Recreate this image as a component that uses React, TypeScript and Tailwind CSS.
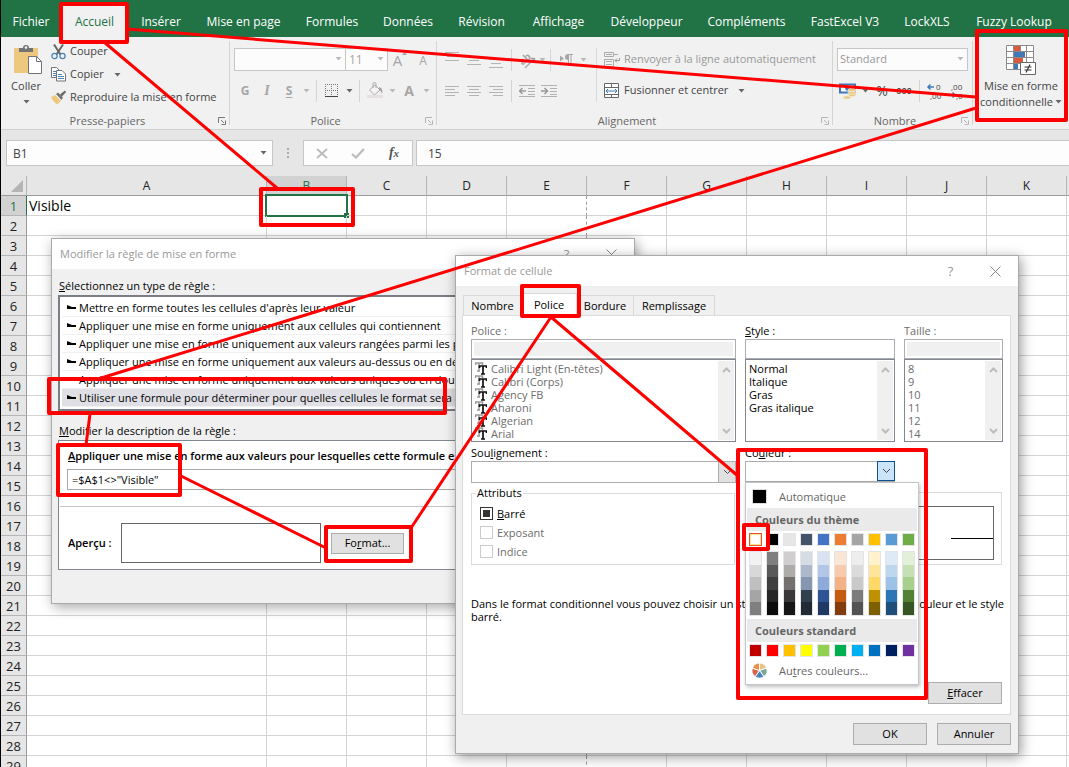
import React from "react";

const UI = "font-['Open_Sans','Noto_Sans',sans-serif]";

function Arrow({ className = "text-[#666]" }: { className?: string }) {
  return (
    <svg width="7" height="4" viewBox="0 0 7 4" className={"shrink-0 " + className} aria-hidden="true">
      <path d="M0.5 0h6L3.5 3.5z" fill="currentColor" />
    </svg>
  );
}

function Chevron({ up = false, className = "text-[#bcbcbc]", thick = 2 }: { up?: boolean; className?: string; thick?: number }) {
  return (
    <svg width="9" height="6" viewBox="0 0 9 6" className={"shrink-0 " + className} aria-hidden="true">
      <path d={up ? "M1 5l3.5-3.5L8 5" : "M1 1l3.5 3.5L8 1"} fill="none" stroke="currentColor" strokeWidth={thick} />
    </svg>
  );
}

function Launcher({ dim = false }: { dim?: boolean }) {
  return (
    <svg width="8" height="8" viewBox="0 0 8 8" className={dim ? "text-[#b5b5b5]" : "text-[#777]"} aria-hidden="true">
      <path d="M0.5 6V0.5H7M3 3l3 3M7.5 3.5v4h-4" fill="none" stroke="currentColor" />
    </svg>
  );
}

function Group({ title, width, dim, children }: { title: string; width: string; dim?: boolean; children: React.ReactNode }) {
  return (
    <section className={"relative flex shrink-0 flex-col " + width}>
      <div className="h-[76px]">{children}</div>
      <div className="flex h-4 items-center pr-1">
        <span className="flex-1 pr-1 text-center text-[11px] leading-4 text-[#666]">{title}</span>
        <button aria-label={title + " : options"}>
          <Launcher dim={dim} />
        </button>
      </div>
      <div className="absolute top-1 right-0 h-[84px] w-px bg-[#d4d4d4]" />
    </section>
  );
}

function Sep() {
  return <div className="mx-1 h-[22px] w-px shrink-0 bg-[#d4d4d4]" />;
}

function Tool({ label, width = "w-[22px]", children }: { label: string; width?: string; children: React.ReactNode }) {
  return (
    <button aria-label={label} className={"flex h-[23px] shrink-0 items-center justify-center " + width}>
      {children}
    </button>
  );
}

function Lines({ rows, className = "text-[#b4b4b4]" }: { rows: [number, number, number][]; className?: string }) {
  return (
    <svg width="16" height="16" viewBox="0 0 16 16" className={className} aria-hidden="true">
      {rows.map(([x, y, w]) => (
        <rect key={y} x={x} y={y} width={w} height="1" fill="currentColor" />
      ))}
    </svg>
  );
}

const tabs: [string, string][] = [
  ["Fichier", "w-[60px]"],
  ["Accueil", "w-[67px]"],
  ["Insérer", "w-[66px]"],
  ["Mise en page", "w-[99px]"],
  ["Formules", "w-[78px]"],
  ["Données", "w-[74px]"],
  ["Révision", "w-[73px]"],
  ["Affichage", "w-[81px]"],
  ["Développeur", "w-[95px]"],
  ["Compléments", "w-[105px]"],
  ["FastExcel V3", "w-[92px]"],
  ["LockXLS", "w-[72px]"],
  ["Fuzzy Lookup", "w-[102px]"],
];

function RibbonTabs() {
  return (
    <nav className="flex h-[37px] shrink-0 items-end bg-[#217346] text-xs text-white">
      {tabs.map(([name, width]) => (
        <button
          key={name}
          className={
            "h-[31px] shrink-0 whitespace-nowrap " + width + (name === "Accueil" ? " bg-[#f1f1f1] text-[#217346]" : "")
          }
        >
          {name}
        </button>
      ))}
    </nav>
  );
}

function Clipboard() {
  return (
    <Group title="Presse-papiers" width="w-[229px]">
      <div className="flex pt-[3px]">
        <button className="flex w-[50px] flex-col items-center pt-1">
          <svg width="30" height="32" viewBox="0 0 30 32" className="ml-1" aria-hidden="true">
            <rect x="1" y="4" width="24" height="25" fill="#edc87e" />
            <path d="M6 8V4h4a3 3 0 0 1 6 0h4v4z" fill="#737373" />
            <circle cx="13" cy="3.6" r="1.3" fill="#f1f1f1" />
            <path d="M15.5 12.500h8l5 5v12h-13z" fill="#fff" stroke="#737373" />
            <path d="M23.500 12.500v5h5" fill="none" stroke="#737373" />
          </svg>
          <span className="text-[11px] leading-5 text-[#444]">Coller</span>
          <Arrow className="mt-1 text-[#666]" />
        </button>
        <div className="flex flex-col text-[11px] text-[#444]">
          <button className="flex h-[23px] items-center gap-1">
            <svg width="15" height="16" viewBox="0 0 15 16" aria-hidden="true">
              <path d="M3 0.500l6.500 10M12 0.500L5.500 10.500" stroke="#666" strokeWidth="2" fill="none" />
              <circle cx="3.500" cy="12" r="2.600" fill="none" stroke="#4b82b8" strokeWidth="1.300" />
              <circle cx="11.500" cy="12" r="2.600" fill="none" stroke="#4b82b8" strokeWidth="1.300" />
            </svg>
            Couper
          </button>
          <button className="flex h-[23px] items-center gap-1">
            <svg width="15" height="15" viewBox="0 0 15 15" aria-hidden="true">
              <path d="M0.500 0.500h5l3 3v7h-8z" fill="#fff" stroke="#737373" />
              <path d="M2 4.500h4M2 6.500h4M2 8.500h3" stroke="#4b82b8" />
              <path d="M5.500 3.500h5.500l3.500 3.500v7h-9z" fill="#fff" stroke="#737373" />
              <path d="M7 7.500h4M7 9.500h6M7 11.500h6" stroke="#4b82b8" />
            </svg>
            Copier
            <Arrow className="ml-1.5 text-[#666]" />
          </button>
          <button className="flex h-[23px] items-center gap-1 whitespace-nowrap">
            <svg width="15" height="15" viewBox="0 0 15 15" aria-hidden="true">
              <path d="M0 7l4-2 6 6-4 3.500C4 13 1.500 10.500 0 7z" fill="#edc87e" />
              <path d="M5 4l2-1.500 5 5L10.500 10z" fill="#737373" />
              <path d="M9 4.500L14 0.500l1 1.500-4 4.500z" fill="#666" />
            </svg>
            Reproduire la mise en forme
          </button>
        </div>
      </div>
    </Group>
  );
}

function FontGroup() {
  return (
    <Group title="Police" width="w-[207px]" dim>
      <div className="flex flex-col gap-2 pt-[11px] pl-1 text-[#a6a6a6]">
        <div className="flex h-[23px] items-center">
          <div className="relative">
            <select aria-label="Police" className="block h-[23px] w-[112px] appearance-none border border-[#c6c6c6] bg-[#fcfcfc]">
              <option></option>
            </select>
            <div className="pointer-events-none absolute top-[9px] right-1">
              <Arrow className="text-[#b9b9b9]" />
            </div>
          </div>
          <div className="relative -ml-px">
            <select
              aria-label="Taille de police"
              className="block h-[23px] w-[43px] appearance-none border border-[#c6c6c6] bg-[#fcfcfc] pl-[3px] text-xs"
            >
              <option>11</option>
            </select>
            <div className="pointer-events-none absolute top-[9px] right-1">
              <Arrow className="text-[#b9b9b9]" />
            </div>
          </div>
          <Tool label="Augmenter la taille de police" width="w-6">
            <span className="text-[15px] leading-4">A</span>
            <svg width="5" height="3" viewBox="0 0 5 3" className="mb-3" aria-hidden="true"><path d="M0 3h5L2.500 0z" fill="currentColor" /></svg>
          </Tool>
          <Tool label="Réduire la taille de police">
            <span className="pt-0.5 text-xs">A</span>
          </Tool>
        </div>
        <div className="flex h-[23px] items-center text-xs">
          <Tool label="Gras"><b>G</b></Tool>
          <Tool label="Italique"><i className="font-[Liberation_Serif,serif] text-sm font-bold">I</i></Tool>
          <Tool label="Souligné"><b className="underline underline-offset-2">S</b></Tool>
          <Tool label="Options de soulignement" width="w-3"><Arrow className="text-[#b9b9b9]" /></Tool>
          <Sep />
          <Tool label="Bordures">
            <svg width="14" height="14" viewBox="0 0 14 14" aria-hidden="true">
              <path d="M0.500 0v13M6.500 0v13M12.500 0v13M0 0.500h13M0 6.500h13" stroke="#777" strokeDasharray="1 1" fill="none" />
              <path d="M0 12.500h13" stroke="#444" />
            </svg>
          </Tool>
          <Tool label="Choix de bordure" width="w-3"><Arrow /></Tool>
          <Sep />
          <Tool label="Couleur de remplissage">
            <svg width="17" height="17" viewBox="0 0 17 17" aria-hidden="true">
              <path d="M2.500 8L8 3l5 5-5.500 5z" fill="#f7f2f5" stroke="#a9a9a9" />
              <path d="M6 6V2a1.500 1.500 0 0 1 3 0v4" fill="none" stroke="#a9a9a9" />
              <path d="M12 5c3 1 4 4 3 7-1-2-1-4-3-4z" fill="#a0a0a0" />
              <rect x="0" y="13" width="16" height="3" fill="#e4dfe3" />
            </svg>
          </Tool>
          <Tool label="Choix du remplissage" width="w-3"><Arrow className="text-[#b9b9b9]" /></Tool>
          <Tool label="Couleur de police"><b className="text-sm">A</b></Tool>
          <Tool label="Choix de la couleur" width="w-3"><Arrow className="text-[#b9b9b9]" /></Tool>
        </div>
      </div>
    </Group>
  );
}

function AlignGroup() {
  return (
    <Group title="Alignement" width="w-[396px]" dim>
      <div className="flex pt-[11px] pl-1 text-[11px]">
        <div className="flex w-[155px] flex-col gap-2 text-[#aaa]">
          <div className="flex items-center">
            <Tool label="Aligner en haut"><Lines rows={[[1, 0, 14], [3, 4, 10], [1, 8, 14]]} /></Tool>
            <Tool label="Aligner au centre"><Lines rows={[[1, 4, 14], [3, 8, 10], [1, 12, 14]]} /></Tool>
            <Tool label="Aligner en bas"><Lines rows={[[1, 7, 14], [3, 11, 10], [1, 15, 14]]} /></Tool>
            <Sep />
            <Tool label="Orientation">
              <svg width="18" height="18" viewBox="0 0 18 18" aria-hidden="true">
                <text x="2" y="12" fontSize="10" fontWeight="bold" fill="#a6a6a6" transform="rotate(-42 7 10)">ab</text>
                <path d="M7 17L16 8M12.500 7.500H16.500v4" fill="none" stroke="#a6a6a6" strokeWidth="1.300" />
              </svg>
            </Tool>
            <Tool label="Choix d'orientation" width="w-2"><Arrow className="text-[#b9b9b9]" /></Tool>
            <Sep />
            <Tool label="Sens du texte">
              <svg width="13" height="11" viewBox="0 0 13 11" aria-hidden="true">
                <path d="M0 1.500v6l4-3zM8 0a3 3 0 0 0 0 6zM8 0h5v1H8z" fill="#a6a6a6" />
                <path d="M8.500 0v10.500M11 0v10.500" stroke="#a6a6a6" />
              </svg>
            </Tool>
            <Tool label="Choix du sens" width="w-3"><Arrow className="text-[#b9b9b9]" /></Tool>
          </div>
          <div className="flex items-center">
            <Tool label="Aligner à gauche"><Lines rows={[[1, 3, 14], [1, 6, 10], [1, 9, 14], [1, 12, 10]]} /></Tool>
            <Tool label="Centrer"><Lines rows={[[1, 3, 14], [3, 6, 10], [1, 9, 14], [3, 12, 10]]} /></Tool>
            <Tool label="Aligner à droite"><Lines rows={[[1, 3, 14], [5, 6, 10], [1, 9, 14], [5, 12, 10]]} /></Tool>
            <Sep />
            {[false, true].map((more) => (
              <Tool key={String(more)} label={more ? "Augmenter le retrait" : "Diminuer le retrait"}>
                <svg width="16" height="14" viewBox="0 0 16 14" aria-hidden="true">
                  <path d="M0 1.500h16M9 4.500h7M9 7.500h7M9 10.500h7M0 12.500h16" stroke="#b0b0b0" />
                  <path d={more ? "M0 7h6M3.500 4L6.500 7l-3 3" : "M7 7H1M3.500 4L0.500 7l3 3"} stroke="#999" strokeWidth="1.500" fill="none" />
                </svg>
              </Tool>
            ))}
          </div>
        </div>
        <div className="h-[54px] w-px bg-[#dadada]" />
        <div className="flex flex-col gap-2 pl-[7px]">
          <button className="flex h-[23px] items-center gap-1 whitespace-nowrap text-[#999]">
            <svg width="16" height="16" viewBox="0 0 16 16" aria-hidden="true">
              <path d="M0.500 0.500h9v4h-9zM0.500 7.500h9v7h-9zM10 2.500h4M2 9.500h6M2 12.500h6M2 2.500h6" fill="none" stroke="#aaa" />
              <path d="M15.500 6v2.500H11M13 6.500L11 8.500l2 2" fill="none" stroke="#999" />
            </svg>
            Renvoyer à la ligne automatiquement
          </button>
          <button className="flex h-[23px] items-center gap-1 whitespace-nowrap text-[#444]">
            <svg width="16" height="16" viewBox="0 0 16 16" aria-hidden="true">
              <path d="M0.500 0.500h14v14h-14zM0.500 4.500h14M0.500 11.500h14M7.500 0.500v4M7.500 11.500v3" fill="#fff" stroke="#666" />
              <path d="M2 8h11M4 6L2 8l2 2M11 6l2 2-2 2" fill="none" stroke="#3d79b8" />
            </svg>
            Fusionner et centrer
            <Arrow className="ml-1.5 text-[#666]" />
          </button>
        </div>
      </div>
    </Group>
  );
}

function NumberGroup() {
  return (
    <Group title="Nombre" width="w-[140px]" dim>
      <div className="flex flex-col gap-2 pt-[11px] pl-1 text-[11px] text-[#444]">
        <div className="relative w-[131px]">
          <select
            aria-label="Format de nombre"
            className="block h-[23px] w-full appearance-none border border-[#c6c6c6] bg-[#fcfcfc] pl-0.5 text-[#999]"
          >
            <option>Standard</option>
          </select>
          <div className="pointer-events-none absolute top-[9px] right-1">
            <Arrow className="text-[#b9b9b9]" />
          </div>
        </div>
        <div className="flex items-center">
          <Tool label="Format comptable">
            <svg width="18" height="18" viewBox="0 0 18 18" aria-hidden="true">
              <path d="M1 2.500h15v8H1z" fill="#fff" stroke="#3d79b8" strokeWidth="2" />
              <circle cx="8.500" cy="6.500" r="2.300" fill="#3d79b8" />
              <g fill="#edc87e" stroke="#f1f1f1" strokeWidth="0.700">
                <ellipse cx="13" cy="13" rx="4" ry="1.700" />
                <ellipse cx="13" cy="10.500" rx="4" ry="1.700" />
                <ellipse cx="13" cy="8" rx="4" ry="1.700" />
                <ellipse cx="8" cy="15.500" rx="4" ry="1.700" />
              </g>
            </svg>
          </Tool>
          <Tool label="Choix de devise" width="w-3"><Arrow /></Tool>
          <Tool label="Pourcentage"><span className="text-sm">%</span></Tool>
          <Tool label="Séparateur de milliers"><span className="text-[9px] font-semibold">000</span></Tool>
          <Sep />
          <Tool label="Ajouter une décimale">
            <svg width="18" height="18" viewBox="0 0 18 18" aria-hidden="true">
              <path d="M8 5H2M4.500 2.500L2 5l2.500 2.500" stroke="#3d79b8" strokeWidth="1.500" fill="none" />
              <text x="10" y="8" fontSize="8" fill="#444">0</text>
              <text x="4" y="17" fontSize="8" fill="#444">,00</text>
            </svg>
          </Tool>
          <Tool label="Réduire les décimales">
            <svg width="18" height="18" viewBox="0 0 18 18" aria-hidden="true">
              <text x="3" y="8" fontSize="8" fill="#444">,00</text>
              <text x="8" y="17" fontSize="8" fill="#444">,0</text>
              <path d="M1 13h6M4.500 10.500L7 13l-2.500 2.500" stroke="#3d79b8" strokeWidth="1.500" fill="none" />
            </svg>
          </Tool>
        </div>
      </div>
    </Group>
  );
}

function ConditionalButton() {
  return (
    <button className="flex w-24 shrink-0 flex-col items-center self-start pt-2 text-[11px] leading-4 text-[#444]">
      <svg width="30" height="30" viewBox="0 0 30 30" className="mb-[3px]" aria-hidden="true">
        <path d="M0.500 0.500h27v24h-27z" fill="#fff" />
        <rect x="8" y="1" width="6" height="5" fill="#d8593b" />
        <rect x="8" y="7" width="11" height="5" fill="#4078b8" />
        <rect x="8" y="13" width="9" height="5" fill="#d8593b" />
        <rect x="8" y="19" width="4" height="5" fill="#4078b8" />
        <path d="M0.500 0.500h27v24h-27zM7.500 0v24M14.500 0v6M20.500 0v24M0 6.500h28M0 12.500h28M0 18.500h28" fill="none" stroke="#8a8a8a" />
        <path d="M14.500 17.500h15v12h-15z" fill="#fff" stroke="#666" />
        <path d="M18.500 22h7M18.500 25h7M24 19.500l-4 8" stroke="#333" strokeWidth="1.200" />
      </svg>
      <span className="whitespace-nowrap">Mise en forme</span>
      <span className="flex items-center gap-0.5 whitespace-nowrap">
        conditionnelle <Arrow />
      </span>
    </button>
  );
}

function FormulaBar() {
  return (
    <div className="flex h-[46px] shrink-0 items-center bg-[#e6e6e6] pl-[5px] text-[#444]">
      <div className="relative">
        <input aria-label="Zone Nom" defaultValue="B1" className="block h-[26px] w-[267px] border border-[#c6c6c6] bg-[#fdfdfd] pl-1.5 text-xs" />
        <div className="absolute top-[11px] right-1.5"><Arrow /></div>
      </div>
      <div className="flex w-[30px] flex-col items-center gap-0.5">
        <i className="size-0.5 bg-[#aaa]" />
        <i className="size-0.5 bg-[#aaa]" />
        <i className="size-0.5 bg-[#aaa]" />
      </div>
      <div className="flex h-[26px] w-[110px] items-center border border-[#c6c6c6] bg-[#fdfdfd]">
        <button aria-label="Annuler la saisie" className="flex flex-1 justify-center">
          <svg width="12" height="11" viewBox="0 0 12 11" aria-hidden="true"><path d="M1 1l10 9M11 1L1 10" stroke="#bbb" strokeWidth="1.700" /></svg>
        </button>
        <button aria-label="Entrer" className="flex flex-1 justify-center">
          <svg width="14" height="11" viewBox="0 0 14 11" aria-hidden="true"><path d="M1 6l4 3.500L13 1" fill="none" stroke="#bbb" strokeWidth="2.200" /></svg>
        </button>
        <button aria-label="Insérer une fonction" className="flex-1 font-[Liberation_Serif,serif] text-sm leading-4 font-bold text-[#555] italic">
          f<span className="text-[11px]">x</span>
        </button>
      </div>
      <input aria-label="Barre de formule" defaultValue="15" className="ml-[3px] h-[26px] min-w-0 flex-1 border border-r-0 border-[#c6c6c6] bg-[#fdfdfd] pl-[11px] text-xs" />
    </div>
  );
}

const columns = ["A", "B", "C", "D", "E", "F", "G", "H", "I", "J", "K", "L"];
const rows = Array.from({ length: 29 }, (_, i) => i + 1);

function Sheet() {
  return (
    <div className="min-h-0 flex-1 overflow-hidden bg-white">
      <table className="w-[1146px] table-fixed border-separate border-spacing-0 text-[13px] leading-[18px] text-[#222]">
        <colgroup>
          <col className="w-[26px]" />
          <col className="w-[240px]" />
          {columns.slice(1).map((c) => <col key={c} className="w-[80px]" />)}
        </colgroup>
        <thead className="text-xs leading-[18px]">
          <tr className="h-5">
            <th className="border-r border-b border-r-[#b5b5b5] border-b-[#9b9b9b] bg-[#e6e6e6] p-0">
              <svg width="12" height="12" viewBox="0 0 12 12" className="ml-2.5" aria-hidden="true"><path d="M12 0v12H0z" fill="#b4b4b4" /></svg>
            </th>
            {columns.map((c) => (
              <th
                key={c}
                className={
                  "border-r border-b border-r-[#b5b5b5] border-b-[#9b9b9b] p-0 font-normal " +
                  (c === "B" ? "bg-[#d2d2d2] text-[#217346]" : "bg-[#e6e6e6]")
                }
              >
                {c === "L" ? "" : c}
              </th>
            ))}
          </tr>
        </thead>
        <tbody>
          {rows.map((r) => (
            <tr key={r} className="h-5">
              <th
                className={
                  "border-r border-b border-b-[#b5b5b5] p-0 font-normal " +
                  (r === 1 ? "border-r-[#217346] bg-[#d2d2d2] text-[#217346]" : "border-r-[#9b9b9b] bg-[#e6e6e6]")
                }
              >
                {r}
              </th>
              {columns.map((c) => (
                <td
                  key={c}
                  className={
                    "relative border-b border-b-[#d4d4d4] p-0 " +
                    (c === "E" ? "border-r border-dashed border-r-[#999] [border-bottom-style:solid]" : "border-r border-r-[#d4d4d4]")
                  }
                >
                  {r === 1 && c === "A" && <span className="pl-0.5 text-sm leading-[18px] text-black">Visible</span>}
                  {r === 1 && c === "B" && (
                    <span className="absolute -top-0.5 -right-0.5 -bottom-0.5 -left-0.5 border-2 border-[#217346]">
                      <span className="absolute -right-[3px] -bottom-[3px] size-[5px] bg-[#217346]" />
                    </span>
                  )}
                </td>
              ))}
            </tr>
          ))}
        </tbody>
      </table>
    </div>
  );
}

function TitleBar({ title }: { title: string }) {
  return (
    <header className="flex h-[30px] items-center bg-white pl-2 text-[#999]">
      <h2 className="flex-1 text-[11px]">{title}</h2>
      <button aria-label="Aide" className="w-[45px] text-[13px]">?</button>
      <button aria-label="Fermer" className="flex w-[45px] justify-center">
        <svg width="11" height="11" viewBox="0 0 11 11" aria-hidden="true"><path d="M0.500 0.500l10 10M10.500 0.500l-10 10" stroke="#888" /></svg>
      </button>
    </header>
  );
}

const ruleTypes = [
  "Mettre en forme toutes les cellules d'après leur valeur",
  "Appliquer une mise en forme uniquement aux cellules qui contiennent",
  "Appliquer une mise en forme uniquement aux valeurs rangées parmi les premières",
  "Appliquer une mise en forme uniquement aux valeurs au-dessus ou en dessous",
  "Appliquer une mise en forme uniquement aux valeurs uniques ou en double",
  "Utiliser une formule pour déterminer pour quelles cellules le format sera appliqué",
];

function RuleDialog() {
  return (
    <div role="dialog" aria-label="Modifier la règle de mise en forme" className="absolute top-[238px] left-[50px] w-[584px] border border-[#aaa] bg-[#f0f0f0] text-[11px] leading-[18px] text-black shadow-[2px_3px_12px_rgba(0,0,0,0.35)]">
      <TitleBar title="Modifier la règle de mise en forme" />
      <div className="px-1.5 pt-2 pb-[33px]">
        <p className="pl-px"><u>S</u>électionnez un type de règle :</p>
        <ul role="listbox" aria-label="Type de règle" className="border-2 border-[#7a7d84] bg-white p-0.5">
          {ruleTypes.map((t, i) => (
            <li
              key={t}
              role="option"
              aria-selected={i === 5}
              className={"flex h-[18px] items-center gap-[3px] overflow-hidden border-b border-[#f0f0f0] pl-[5px] whitespace-nowrap" + (i === 5 ? " bg-[#dfdfe5]" : "")}
            >
              <svg width="9" height="6" viewBox="0 0 9 6" className="shrink-0" aria-hidden="true"><path d="M0 0l5 2h4v2H0z" fill="#000" /></svg>
              {t}
            </li>
          ))}
        </ul>
        <p className="pt-[11px] pl-px"><u>M</u>odifier la description de la règle :</p>
        <div className="border border-[#828790] bg-white pt-1.5 pb-1.5">
          <label htmlFor="rule-formula" className="block truncate pl-[9px] font-semibold">
            <u>A</u>ppliquer une mise en forme aux valeurs pour lesquelles cette formule est vraie :
          </label>
          <input id="rule-formula" defaultValue={'=$A$1<>"Visible"'} className="mt-1 ml-2 block h-[21px] w-[540px] border border-[#aaa] bg-white pl-1" />
          <hr className="mx-px mt-4 border-[#c4c4c4]" />
          <div className="flex items-center pt-4 pl-[9px]">
            <b className="w-[53px] font-semibold">Aperçu :</b>
            <div className="h-10 w-[200px] border border-[#666] bg-white" />
            <button className="ml-2.5 h-[21px] w-[73px] border border-[#adadad] bg-[#e1e1e1]">Fo<u>r</u>mat...</button>
          </div>
        </div>
      </div>
    </div>
  );
}

function ListBox({ items, label, dim, icons }: { items: string[]; label: string; dim?: boolean; icons?: boolean }) {
  return (
    <div className="flex h-[83px] border border-[#828790] bg-white">
      <ul role="listbox" aria-label={label} className={"min-w-0 flex-1 overflow-hidden pt-0.5 pl-[3px] " + (dim ? "text-[#6d6d6d]" : "text-black")}>
        {items.map((t) => (
          <li key={t} role="option" aria-selected={false} className="flex h-[13px] items-center gap-1 leading-[13px] whitespace-nowrap">
            {icons && (
              <svg width="12" height="13" viewBox="0 0 12 13" className="shrink-0" aria-hidden="true">
                <path d="M0.500 3V1h7v2M4 1v8M2 9h3" fill="none" stroke="#999" strokeWidth="1.500" />
                <path d="M4.500 6V4h7v2M8 4v8M6 12h4" fill="none" stroke="#111" strokeWidth="1.700" />
              </svg>
            )}
            {t}
          </li>
        ))}
      </ul>
      <div className="m-px flex w-4 flex-col items-center justify-between bg-[#f0f0f0] py-[6px]">
        <Chevron up />
        <Chevron />
      </div>
    </div>
  );
}

function Field({ label, name, width, items, dim, icons }: { label: React.ReactNode; name: string; width: string; items: string[]; dim?: boolean; icons?: boolean }) {
  return (
    <div className={width}>
      <label className={"block leading-[17px] " + (dim ? "text-[#6d6d6d]" : "text-black")}>
        {label}
        <span className="block border border-[#abadb3] bg-white p-0.5">
          <input disabled={dim} className={"block h-[14px] w-full " + (dim ? "bg-[#f0f0f0]" : "bg-white")} />
        </span>
      </label>
      <ListBox items={items} label={name} dim={dim} icons={icons} />
    </div>
  );
}

const dialogButton = "h-[22px] w-[74px] border border-[#adadad] bg-[#e1e1e1]";

function FormatDialog() {
  return (
    <div role="dialog" aria-label="Format de cellule" className="absolute top-[255px] left-[454px] w-[564px] border border-[#aaa] bg-[#f0f0f0] text-[11px] leading-[18px] text-black shadow-[2px_3px_12px_rgba(0,0,0,0.4)]">
      <TitleBar title="Format de cellule" />
      <div className="pt-[7px] pr-[7px] pb-2 pl-1.5">
        <div role="tablist" className="flex items-end pl-px">
          <button role="tab" className="h-[20px] w-[58px] border-t border-l border-[#d9d9d9]">Nombre</button>
          <button role="tab" aria-selected="true" className="relative -mb-px h-[23px] w-[56px] border border-b-0 border-[#d9d9d9] bg-white">Police</button>
          <button role="tab" className="h-[20px] w-[57px] border-t border-r border-[#d9d9d9]">Bordure</button>
          <button role="tab" className="h-[20px] w-[81px] border-t border-r border-[#d9d9d9]">Remplissage</button>
        </div>
        <div className="flex h-[400px] flex-col border border-[#dcdcdc] bg-white pt-1.5 pb-2.5 pl-2">
          <div className="flex">
            <Field
              label="Police :"
              name="Police"
              width="w-[265px]"
              items={["Calibri Light (En-têtes)", "Calibri (Corps)", "Agency FB", "Aharoni", "Algerian", "Arial"]}
              dim
              icons
            />
            <div className="ml-[9px] w-[150px]">
              <Field label={<><u>S</u>tyle :</>} name="Style" width="w-full" items={["Normal", "Italique", "Gras", "Gras italique"]} />
            </div>
            <div className="ml-[9px] w-[99px]">
              <Field label="Taille :" name="Taille" width="w-full" items={["8", "9", "10", "11", "12", "14"]} dim />
            </div>
          </div>

          <div className="flex gap-[9px] pt-0.5 leading-[17px]">
            <label className="w-[265px]">
              Sou<u>l</u>ignement :
              <span className="relative block">
                <select className="block h-[22px] w-full appearance-none border border-[#adadad] bg-white"><option></option></select>
                <span className="pointer-events-none absolute inset-y-0 right-0 flex w-[18px] items-center justify-center border border-[#adadad] bg-[#e1e1e1]">
                  <Chevron className="text-[#555]" thick={1} />
                </span>
              </span>
            </label>
            <div className="relative w-[150px]">
              <label htmlFor="font-color" className="block">Co<u>u</u>leur :</label>
              <div className="relative">
                <select id="font-color" className="block h-[21px] w-full appearance-none border border-[#adadad] bg-white"><option></option></select>
                <span className="pointer-events-none absolute top-0 right-0 flex h-5 w-[18px] items-center justify-center border border-[#0b5394] bg-[#cce4f7]">
                  <Chevron className="text-[#444]" thick={1} />
                </span>
              </div>
              <ColorMenu />
            </div>
          </div>

          <div className="flex gap-2.5 pt-[1px]">
            <fieldset className="h-[81px] w-[264px] border border-[#dcdcdc] pl-2">
              <legend className="-ml-1 px-px">Attributs</legend>
              <div className="mt-0.5 flex flex-col">
                <label className="flex h-[19px] items-center gap-1">
                  <input type="checkbox" defaultChecked className="size-[13px] appearance-none border border-[#333] bg-[#333] shadow-[inset_0_0_0_2px_white]" />
                  <span><u>B</u>arré</span>
                </label>
                <label className="flex h-[19px] items-center gap-1 text-[#6d6d6d]">
                  <input type="checkbox" disabled className="size-[13px] appearance-none border border-[#ccc] bg-white" />
                  Exposant
                </label>
                <label className="flex h-[19px] items-center gap-1 text-[#6d6d6d]">
                  <input type="checkbox" disabled className="size-[13px] appearance-none border border-[#ccc] bg-white" />
                  Indice
                </label>
              </div>
            </fieldset>
            <div className="mt-2 h-[73px] w-[257px] border border-[#dcdcdc] px-[7px] pt-[13px]">
              <div className="flex h-[54px] items-center justify-end border border-[#666]">
                <div className="mt-2.5 h-px w-[42px] bg-black" />
              </div>
            </div>
          </div>

          <p className="pt-8 leading-[13px]">
            Dans le format conditionnel vous pouvez choisir un style de police, le soulignement, la couleur et le style barré.
          </p>
          <button className={"mt-auto mr-2 self-end " + dialogButton}><u>E</u>ffacer</button>
        </div>
        <div className="flex justify-end gap-2.5 pt-2">
          <button className={dialogButton}>OK</button>
          <button className={dialogButton}>Annuler</button>
        </div>
      </div>
    </div>
  );
}

const themeColors: { base: string; shades: string[] }[] = [
  { base: "#ffffff", shades: ["#f2f2f2", "#d8d8d8", "#bfbfbf", "#a5a5a5", "#7f7f7f"] },
  { base: "#000000", shades: ["#7f7f7f", "#595959", "#3f3f3f", "#262626", "#0c0c0c"] },
  { base: "#e7e6e6", shades: ["#d0cece", "#aeabab", "#757070", "#3a3838", "#171616"] },
  { base: "#44546a", shades: ["#d6dce4", "#adb9ca", "#8496b0", "#323f4f", "#222a35"] },
  { base: "#4472c4", shades: ["#d9e2f3", "#b4c6e7", "#8eaadb", "#2f5496", "#1f3864"] },
  { base: "#ed7d31", shades: ["#fbe5d5", "#f7cbac", "#f4b183", "#c55a11", "#833c0b"] },
  { base: "#a5a5a5", shades: ["#ededed", "#dbdbdb", "#c9c9c9", "#7b7b7b", "#525252"] },
  { base: "#ffc000", shades: ["#fff2cc", "#fee599", "#ffd965", "#bf9000", "#7f6000"] },
  { base: "#5b9bd5", shades: ["#deebf6", "#bdd7ee", "#9cc3e5", "#2e75b5", "#1e4e79"] },
  { base: "#70ad47", shades: ["#e2efd9", "#c5e0b3", "#a8d08d", "#538135", "#375623"] },
];
const standardColors = ["#c00000", "#ff0000", "#ffc000", "#ffff00", "#92d050", "#00b050", "#00b0f0", "#0070c0", "#002060", "#7030a0"];

function ColorMenu() {
  return (
    <div role="menu" className="absolute top-[38px] left-0 z-10 w-[174px] border border-[#c6c6c6] bg-white px-px pt-px pb-0.5 text-[11px] text-[#666] shadow-[1px_2px_4px_rgba(0,0,0,0.25)]">
      <button role="menuitem" className="flex h-6 w-full items-center pl-[5px]">
        <i className="mr-3 size-[15px] border border-[#ddd] bg-black" />
        Automatique
      </button>
      <h3 className="flex h-[23px] items-center bg-[#eaeaea] pl-2 font-bold">Couleurs du thème</h3>
      <div className="flex gap-1 px-0.5 pt-0.5">
        {themeColors.map(({ base, shades }, i) => (
          <div key={base} className="flex flex-col gap-[5px]">
            <button
              aria-label={base}
              className={"size-[13px] border " + (i === 0 ? "border-[#e8532a] shadow-[inset_0_0_0_1px_#ffe294]" : "border-[#e2e4e7]")}
              style={{ backgroundColor: base }}
            />
            <div className="flex h-[65px] flex-col border border-[#e2e4e7]">
              {shades.map((s) => (
                <button key={s} aria-label={s} className="w-[11px] flex-1" style={{ backgroundColor: s }} />
              ))}
            </div>
          </div>
        ))}
      </div>
      <h3 className="mt-[3px] flex h-[23px] items-center bg-[#eaeaea] pl-2 font-bold">Couleurs standard</h3>
      <div className="flex gap-1 px-0.5 pt-0.5">
        {standardColors.map((c) => (
          <button key={c} aria-label={c} className="size-[13px] border border-[#e2e4e7]" style={{ backgroundColor: c }} />
        ))}
      </div>
      <button role="menuitem" className="mt-px flex h-6 w-full items-center pl-[5px]">
        <svg width="15" height="15" viewBox="-8 -8 16 16" className="mr-3" aria-hidden="true">
          <g stroke="#fff" strokeWidth="1">
            <path d="M0 0L0 -8A8 8 0 0 1 7.600 -2.500z" fill="#e9c383" />
            <path d="M0 0L7.600 -2.500A8 8 0 0 1 4.700 6.500z" fill="#76a797" />
            <path d="M0 0L4.700 6.500A8 8 0 0 1 -4.700 6.500z" fill="#4a82bd" />
            <path d="M0 0L-4.700 6.500A8 8 0 0 1 -7.600 -2.500z" fill="#d8654b" />
            <path d="M0 0L-7.600 -2.500A8 8 0 0 1 0 -8z" fill="#e69148" />
          </g>
        </svg>
        <span>Au<u>t</u>res couleurs...</span>
      </button>
    </div>
  );
}

const frames = [
  [61, 4, 66, 38],
  [261, 189, 92, 36],
  [977, 31, 89, 89],
  [49, 379, 396, 34],
  [58, 445, 122, 50],
  [326, 527, 85, 34],
  [522, 286, 57, 30],
  [738, 450, 188, 248],
  [744, 525, 24, 24],
];
const links = [
  [104, 42, 277, 188],
  [127, 29, 976, 97],
  [976, 108, 98, 379],
  [90, 414, 86, 445],
  [181, 476, 326, 548],
  [411, 528, 551, 317],
  [551, 317, 738, 476],
];

function Annotations() {
  return (
    <svg width="1069" height="767" viewBox="0 0 1069 767" className="pointer-events-none absolute top-0 -left-px z-20" aria-hidden="true">
      <g fill="none" stroke="#ff0000" strokeLinejoin="round">
        {links.map(([x1, y1, x2, y2]) => (
          <line key={x1 + "-" + x2} x1={x1} y1={y1} x2={x2} y2={y2} strokeWidth="3" />
        ))}
        {frames.map(([x, y, w, h]) => (
          <rect key={x} x={x} y={y} width={w} height={h} strokeWidth="4" />
        ))}
      </g>
    </svg>
  );
}

export default function App() {
  return (
    <div className={"relative flex h-screen flex-col overflow-hidden border-l border-black bg-[#e6e6e6] " + UI}>
      <RibbonTabs />
      <div className="flex h-[93px] shrink-0 border-b border-[#d0d0d0] bg-[#f1f1f1]">
        <Clipboard />
        <FontGroup />
        <AlignGroup />
        <NumberGroup />
        <ConditionalButton />
      </div>
      <FormulaBar />
      <Sheet />
      <RuleDialog />
      <FormatDialog />
      <Annotations />
    </div>
  );
}
